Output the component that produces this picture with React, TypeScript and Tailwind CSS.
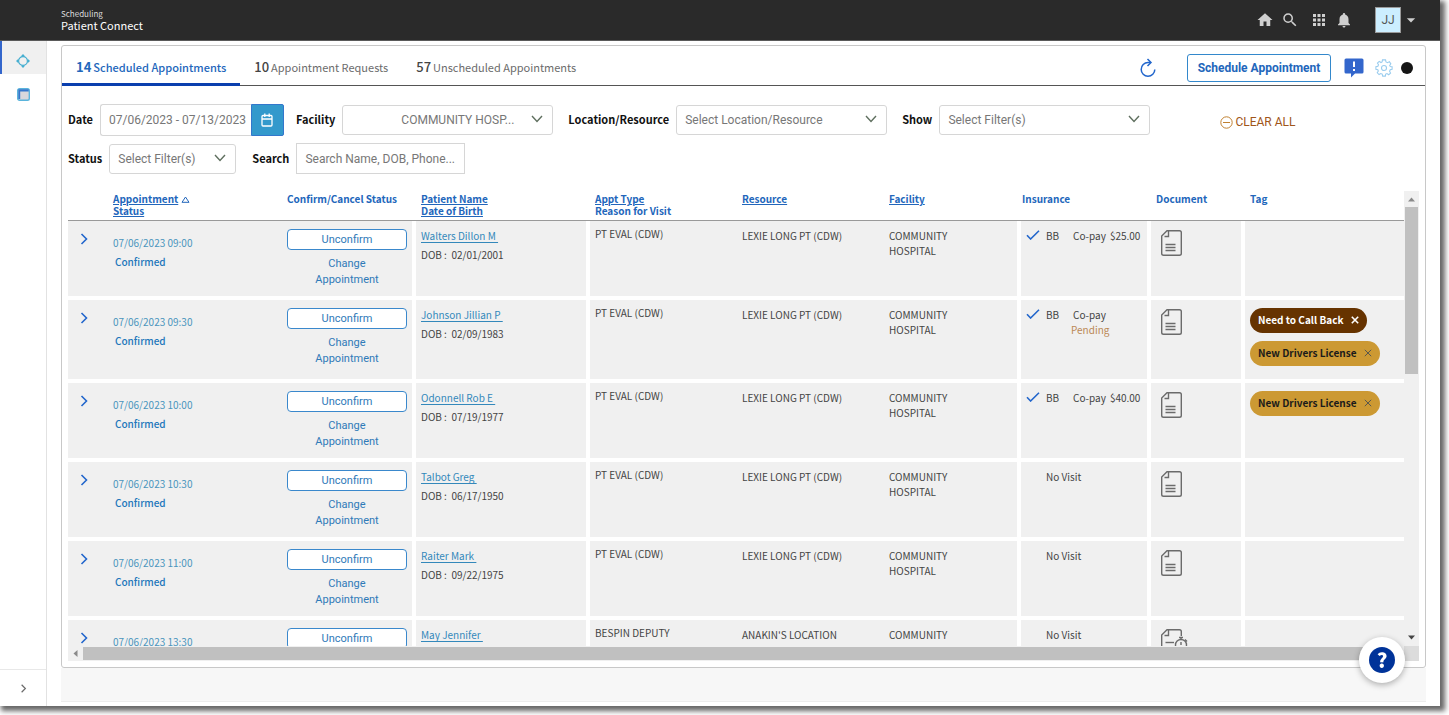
import { useState } from "react";
import type { ReactNode } from "react";
import { MdHome, MdSearch, MdApps, MdNotifications, MdArrowDropDown } from "react-icons/md";

interface Tag {
  label: string;
  dark?: boolean;
}

interface Appointment {
  time: string;
  patient: string;
  dob: string;
  apptType: string;
  resource: string;
  facility: string;
  copay?: string;
  pending?: boolean;
  insured: boolean;
  timedDocument?: boolean;
  tags: Tag[];
}

const appointments: Appointment[] = [
  {
    time: "07/06/2023 09:00",
    patient: "Walters Dillon M",
    dob: "02/01/2001",
    apptType: "PT EVAL (CDW)",
    resource: "LEXIE LONG PT (CDW)",
    facility: "COMMUNITY HOSPITAL",
    copay: "$25.00",
    insured: true,
    tags: [],
  },
  {
    time: "07/06/2023 09:30",
    patient: "Johnson Jillian P",
    dob: "02/09/1983",
    apptType: "PT EVAL (CDW)",
    resource: "LEXIE LONG PT (CDW)",
    facility: "COMMUNITY HOSPITAL",
    pending: true,
    insured: true,
    tags: [{ label: "Need to Call Back", dark: true }, { label: "New Drivers License" }],
  },
  {
    time: "07/06/2023 10:00",
    patient: "Odonnell Rob E",
    dob: "07/19/1977",
    apptType: "PT EVAL (CDW)",
    resource: "LEXIE LONG PT (CDW)",
    facility: "COMMUNITY HOSPITAL",
    copay: "$40.00",
    insured: true,
    tags: [{ label: "New Drivers License" }],
  },
  {
    time: "07/06/2023 10:30",
    patient: "Talbot Greg",
    dob: "06/17/1950",
    apptType: "PT EVAL (CDW)",
    resource: "LEXIE LONG PT (CDW)",
    facility: "COMMUNITY HOSPITAL",
    insured: false,
    tags: [],
  },
  {
    time: "07/06/2023 11:00",
    patient: "Raiter Mark",
    dob: "09/22/1975",
    apptType: "PT EVAL (CDW)",
    resource: "LEXIE LONG PT (CDW)",
    facility: "COMMUNITY HOSPITAL",
    insured: false,
    tags: [],
  },
  {
    time: "07/06/2023 13:30",
    patient: "May Jennifer",
    dob: "05/11/1988",
    apptType: "BESPIN DEPUTY",
    resource: "ANAKIN'S LOCATION",
    facility: "COMMUNITY HOSPITAL",
    insured: false,
    timedDocument: true,
    tags: [],
  },
];

const tabs = [
  { count: 14, label: "Scheduled Appointments" },
  { count: 10, label: "Appointment Requests" },
  { count: 57, label: "Unscheduled Appointments" },
];

function Chevron({ className }: { className: string }) {
  return (
    <svg viewBox="0 0 12 12" className={className} fill="none" stroke="currentColor" strokeWidth="1.6">
      <path d="M3.5 1 L8.5 6 L3.5 11" />
    </svg>
  );
}

function DocumentIcon({ timed }: { timed?: boolean }) {
  return (
    <svg viewBox="0 0 28 28" className="h-7 w-7" fill="none" stroke="#6b6b6b" strokeWidth="1.4">
      {timed ? (
        <>
          <path d="M21.3 8V3.5Q21.3 1.7 19.5 1.7H7L1.7 7V24.5Q1.7 26 3.5 26H12" />
          <path d="M8.5 2V7.5H4.5" />
          <path d="M5.5 14.5H14" />
          <circle cx="21" cy="17" r="5.5" />
          <path d="M19 9.5H23M21 9.5V11.5M21 14V17M25 11.5L27 13.5" />
        </>
      ) : (
        <>
          <path d="M7 1.7H19.5Q21.3 1.7 21.3 3.5V24.5Q21.3 26.3 19.5 26.3H3.5Q1.7 26.3 1.7 24.5V7Z" />
          <path d="M8.5 2V7.5H4.5" />
          <path d="M5.5 15.5H15.5M5.5 18.5H15.5M5.5 21.5H15.5" />
        </>
      )}
    </svg>
  );
}

function SelectBox({
  id,
  value,
  width,
  textClass,
}: {
  id: string;
  value: string;
  width: string;
  textClass: string;
}) {
  return (
    <div className={`relative ${width}`}>
      <select
        id={id}
        className={`h-[30px] w-full appearance-none rounded-[3px] border border-[#d6d6d6] bg-white pr-8 font-[Roboto,sans-serif] text-xs text-[#777777] ${textClass}`}
      >
        <option>{value}</option>
      </select>
      <svg
        viewBox="0 0 12 8"
        className="pointer-events-none absolute top-2.5 right-2.5 h-2 w-3"
        fill="none"
        stroke="#5f6f5f"
        strokeWidth="1.4"
      >
        <path d="M1 1 L6 6.5 L11 1" />
      </svg>
    </div>
  );
}

function FieldLabel({ htmlFor, children }: { htmlFor: string; children: ReactNode }) {
  return (
    <label htmlFor={htmlFor} className="mr-[7px] pb-0.5 text-[11px] leading-4 font-bold whitespace-nowrap text-[#111111]">
      {children}
    </label>
  );
}

function TagPill({ tag }: { tag: Tag }) {
  return (
    <span
      className={`flex h-[25px] w-fit items-center gap-2 rounded-full px-2 pb-0.5 text-[10px] leading-4 font-bold whitespace-nowrap ${
        tag.dark ? "bg-[#663300] text-white" : "bg-[#cc9933] text-[#1a1a1a]"
      }`}
    >
      {tag.label}
      <button type="button" aria-label={`Remove ${tag.label}`}>
        <svg
          viewBox="0 0 10 10"
          className="h-2 w-2"
          fill="none"
          stroke={tag.dark ? "#ffffff" : "#55554d"}
          strokeWidth={tag.dark ? 2 : 1.2}
        >
          <path d="M1 1L9 9M9 1L1 9" />
        </svg>
      </button>
    </span>
  );
}

function TopBar() {
  return (
    <header className="flex h-[41px] shrink-0 items-center justify-between border-b border-[#5a5a5a] bg-[#2a2a2a] pr-[19px] pl-[61px]">
      <div className="pb-0.5 text-white">
        <p className="text-[8px] leading-3 text-[#dddddd]">Scheduling</p>
        <h1 className="text-[11px] leading-[11px]">Patient Connect</h1>
      </div>
      <div className="flex items-center text-[#cfcfcf]">
        <button type="button" aria-label="Home" className="mr-[7px]">
          <MdHome className="h-[18px] w-[18px]" />
        </button>
        <button type="button" aria-label="Search" className="mr-[11px]">
          <MdSearch className="h-[18px] w-[18px]" />
        </button>
        <button type="button" aria-label="Apps" className="mr-[7px]">
          <MdApps className="h-[18px] w-[18px]" />
        </button>
        <button type="button" aria-label="Notifications" className="mr-[22px]">
          <MdNotifications className="h-[18px] w-[18px]" />
        </button>
        <button type="button" className="flex items-center">
          <span className="flex h-[26px] w-[26px] items-center justify-center border border-[#9a9a9a] bg-[#cceeff] font-[Roboto,sans-serif] text-xs text-[#555555]">
            JJ
          </span>
          <MdArrowDropDown className="h-5 w-5" />
        </button>
      </div>
    </header>
  );
}

function SideNav() {
  return (
    <nav className="flex w-[47px] shrink-0 flex-col border-r border-[#e2e2e2] bg-white">
      <a
        href="#connect"
        aria-label="Patient Connect"
        className="flex h-[33px] items-center justify-center border-l-2 border-[#3366cc] bg-[#f0f0f0] pt-1.5 pr-[3px]"
      >
        <svg viewBox="0 0 14 14" className="h-3.5 w-3.5" fill="none" stroke="#45aed0" strokeWidth="1.2">
          <circle cx="7" cy="7" r="4.4" />
          <g fill="#45aed0" stroke="none">
            <path d="M7 0L9.3 2.4H4.7Z" />
            <path d="M7 14L9.3 11.6H4.7Z" />
            <path d="M0 7L2.4 4.7V9.3Z" />
            <path d="M14 7L11.6 4.7V9.3Z" />
          </g>
        </svg>
      </a>
      <a href="#calendar" aria-label="Calendar" className="mt-3.5 flex justify-center">
        <svg viewBox="0 0 13 13" className="h-[13px] w-[13px]">
          <rect x="0.7" y="0.7" width="11.6" height="11.6" rx="1.8" fill="#d8d8dc" stroke="#5ab4dc" strokeWidth="1.4" />
          <path d="M1.3 1.3H11.7V3.6H3.2V11H1.3Z" fill="#3377cc" />
        </svg>
      </a>
      <button
        type="button"
        aria-label="Expand navigation"
        className="mt-auto flex h-[37px] items-center justify-center border-t border-[#e8e8e8] text-[#6b6b6b]"
      >
        <Chevron className="h-[9px] w-[9px]" />
      </button>
    </nav>
  );
}

function TabBar() {
  const [active, setActive] = useState(0);

  return (
    <div className="flex h-10 shrink-0 items-stretch justify-between border-b border-[#555555]">
      <div role="tablist" className="flex">
        {tabs.map((tab, idx) => (
          <button
            key={tab.label}
            type="button"
            role="tab"
            aria-selected={active === idx}
            onClick={() => setActive(idx)}
            className={`-mb-px flex items-center gap-0.5 border-b-[3px] px-3.5 pt-1 text-[11px] leading-4 whitespace-nowrap ${
              active === idx
                ? "border-[#0a3fae] font-medium text-[#2266bb]"
                : "border-transparent text-[#6b6b6b]"
            }`}
          >
            <span className={`text-[13px] ${active === idx ? "font-bold" : "font-medium text-[#444444]"}`}>
              {tab.count}
            </span>
            {tab.label}
          </button>
        ))}
      </div>
      <div className="flex items-center pt-1 pr-3">
        <button type="button" aria-label="Refresh" className="mr-[30px]">
          <svg viewBox="0 0 18 20" className="h-5 w-[18px]" fill="none" stroke="#2266cc" strokeWidth="1.5">
            <path d="M11 4.6H9A6.8 6.8 0 1 0 15.8 11.4" />
            <path d="M8.5 1L12 4.6L8.5 8" />
          </svg>
        </button>
        <button
          type="button"
          className="mr-[13px] h-7 w-36 rounded-[3px] border border-[#3388cc] bg-white font-[Roboto,sans-serif] text-xs font-bold whitespace-nowrap text-[#2266bb]"
        >
          Schedule Appointment
        </button>
        <button type="button" aria-label="Feedback" className="mr-[11px]">
          <svg viewBox="0 0 20 20" className="h-5 w-5">
            <path d="M2 0.5H18Q19.5 0.5 19.5 2V14Q19.5 15.5 18 15.5H11L7 19.5V15.5H2Q0.5 15.5 0.5 14V2Q0.5 0.5 2 0.5Z" fill="#3366cc" />
            <path d="M10 3.5V9M10 11V13" stroke="#ffffff" strokeWidth="2" />
          </svg>
        </button>
        <button type="button" aria-label="Settings" className="mr-2">
          <svg viewBox="0 0 20 20" className="h-[18px] w-[18px]" fill="none" stroke="#99ccee" strokeWidth="1.2">
            <path d="M8.3 1H11.7L12.2 3.3L14 4.1L16 2.9L17.6 5.4L16.3 7.3L17 8.3L19 8.5V11.5L16.9 12L16.2 13.6L17.3 15.6L15.2 17.5L13.3 16.2L11.9 16.8L11.5 19H8.5L8 16.8L6.4 16.1L4.5 17.3L2.5 15.3L3.7 13.4L3.1 12L1 11.5V8.5L3.2 8L3.9 6.4L2.7 4.5L4.7 2.6L6.6 3.9L7.9 3.3Z" />
            <circle cx="10" cy="10" r="2.8" />
          </svg>
        </button>
        <span className="h-3 w-3 rounded-full bg-[#151515]" />
      </div>
    </div>
  );
}

function Filters() {
  return (
    <form className="shrink-0 pt-[18px] pl-[6px]">
      <div className="flex h-8 items-center">
        <FieldLabel htmlFor="date">Date</FieldLabel>
        <div className="flex">
          <input
            id="date"
            type="text"
            defaultValue="07/06/2023 - 07/13/2023"
            className="h-8 w-[151px] rounded-l-[3px] border border-r-0 border-[#d6d6d6] bg-white pl-2 font-[Roboto,sans-serif] text-xs text-[#777777]"
          />
          <button
            type="button"
            aria-label="Open calendar"
            className="flex h-8 w-[33px] items-center justify-center rounded-r-[2px] border border-[#3377cc] bg-[#3399cc]"
          >
            <svg viewBox="0 0 12 14" className="h-3.5 w-3" fill="none" stroke="#ffffff" strokeWidth="1.3">
              <rect x="1" y="2.5" width="10" height="10.5" rx="1" />
              <path d="M1 6H11M3.8 0.5V4M8.2 0.5V4" />
            </svg>
          </button>
        </div>
        <div className="ml-3 flex items-center">
          <FieldLabel htmlFor="facility">Facility</FieldLabel>
          <SelectBox id="facility" value="COMMUNITY HOSP..." width="w-[211px]" textClass="pl-[58px]" />
        </div>
        <div className="ml-[15px] flex items-center">
          <FieldLabel htmlFor="location">Location/Resource</FieldLabel>
          <SelectBox id="location" value="Select Location/Resource" width="w-[211px]" textClass="pl-2" />
        </div>
        <div className="ml-[15px] flex items-center">
          <FieldLabel htmlFor="show">Show</FieldLabel>
          <SelectBox id="show" value="Select Filter(s)" width="w-[211px]" textClass="pl-2" />
        </div>
        <button
          type="reset"
          className="ml-[70px] flex items-center gap-0.5 pt-1 font-[Roboto,sans-serif] text-xs whitespace-nowrap text-[#a0561a]"
        >
          <svg viewBox="0 0 13 13" className="h-[13px] w-[13px]" fill="none" stroke="#c08030" strokeWidth="1">
            <circle cx="6.5" cy="6.5" r="5.7" />
            <path d="M3 6.5H10" />
          </svg>
          CLEAR ALL
        </button>
      </div>
      <div className="mt-[7px] flex h-[31px] items-center">
        <FieldLabel htmlFor="status">Status</FieldLabel>
        <SelectBox id="status" value="Select Filter(s)" width="w-[127px]" textClass="pl-2" />
        <div className="ml-4 flex items-center">
          <FieldLabel htmlFor="search">Search</FieldLabel>
          <input
            id="search"
            type="text"
            placeholder="Search Name, DOB, Phone..."
            className="h-[31px] w-[169px] border border-[#d6d6d6] bg-white px-2 font-[Roboto,sans-serif] text-xs placeholder:text-[#777777]"
          />
        </div>
      </div>
    </form>
  );
}

const head =
  "border-b border-[#999999] pt-0.5 pl-[5px] text-left align-top text-[10px] leading-3 font-bold text-[#2266bb]";
const cell = "border-b-4 border-white bg-[#f0f0f0] pl-[5px] align-top";

function AppointmentRow({ item }: { item: Appointment }) {
  return (
    <tr className="h-[79px]">
      <td className={cell}>
        <button type="button" aria-label={`Expand ${item.patient}`} className="mt-3 ml-[5px] block text-[#2266cc]">
          <Chevron className="h-3 w-3" />
        </button>
      </td>
      <td className={cell}>
        <p className="pt-3.5 text-[10px] leading-4 text-[#4a95bd]">{item.time}</p>
        <p className="pt-[3px] pl-0.5 text-[10px] leading-4 font-medium text-[#2277bb]">Confirmed</p>
      </td>
      <td className={`${cell} pr-[5px] font-[Roboto,sans-serif] text-[11px] text-[#2f7ab8]`}>
        <button type="button" className="mt-2 block h-[21px] w-full rounded-[4px] border border-[#3a88cc] bg-white leading-4">
          Unconfirm
        </button>
        <a href="#change" className="mt-1.5 block px-4 text-center leading-4">
          Change Appointment
        </a>
      </td>
      <td className={`${cell} border-l-4 text-[10px] leading-4`}>
        <a href="#patient" className="mt-[7px] block w-fit whitespace-pre text-[#3388bb] underline underline-offset-2">
          {item.patient + " "}
        </a>
        <p className="mt-[3px] text-[#444444]">DOB :&nbsp; {item.dob}</p>
      </td>
      <td className={`${cell} border-l-4 pt-[5px] text-[10px] leading-[15px] text-[#444444]`}>{item.apptType}</td>
      <td className={`${cell} pt-[7px] text-[10px] leading-[15px] text-[#444444]`}>{item.resource}</td>
      <td className={`${cell} pt-[7px] pr-12 text-[10px] leading-[15px] text-[#444444]`}>{item.facility}</td>
      <td className={`${cell} border-l-4 pt-[7px] text-[10px] leading-[15px] text-[#444444]`}>
        {item.insured ? (
          <div className="flex">
            <svg viewBox="0 0 14 10" className="mt-0.5 mr-1.5 h-2.5 w-3.5 shrink-0" fill="none" stroke="#2266cc" strokeWidth="1.6">
              <path d="M1 5.2L4.6 9L13 0.8" />
            </svg>
            <span className="w-[27px]">BB</span>
            <span>
              Co-pay
              {item.copay && <span className="ml-1">{item.copay}</span>}
              {item.pending && <span className="-ml-0.5 block text-[#bb8855]">Pending</span>}
            </span>
          </div>
        ) : (
          <span className="pl-5">No Visit</span>
        )}
      </td>
      <td className={`${cell} border-l-4 pt-2`}>
        <a href="#document" aria-label="Document" className="ml-1 block w-fit">
          <DocumentIcon timed={item.timedDocument} />
        </a>
      </td>
      <td className={`${cell} border-l-4`}>
        <div className="flex flex-col gap-2 pt-2 pb-[13px]">
          {item.tags.map((tag) => (
            <TagPill key={tag.label} tag={tag} />
          ))}
        </div>
      </td>
    </tr>
  );
}

function AppointmentTable() {
  return (
    <table className="w-full table-fixed border-separate border-spacing-0">
      <colgroup>
        <col className="w-10" />
        <col className="w-[174px]" />
        <col className="w-[130px]" />
        <col className="w-[174px]" />
        <col className="w-[151px]" />
        <col className="w-[147px]" />
        <col className="w-[133px]" />
        <col className="w-[130px]" />
        <col className="w-[94px]" />
        <col />
      </colgroup>
      <thead>
        <tr className="h-[30px]">
          <th className={head} aria-label="Expand" />
          <th className={head}>
            <span className="flex items-center gap-[3px]">
              <a href="#sort-appointment" className="underline">
                Appointment
              </a>
              <svg viewBox="0 0 9 7" className="h-[7px] w-[9px]" fill="none" stroke="#2266bb">
                <path d="M1 6.3L4.5 1L8 6.3Z" />
              </svg>
            </span>
            <a href="#sort-status" className="block underline">
              Status
            </a>
          </th>
          <th className={head}>Confirm/Cancel Status</th>
          <th className={`${head} pl-[9px]`}>
            <a href="#sort-name" className="block underline">
              Patient Name
            </a>
            <a href="#sort-dob" className="block underline">
              Date of Birth
            </a>
          </th>
          <th className={`${head} pl-[9px]`}>
            <a href="#sort-type" className="block underline">
              Appt Type
            </a>
            Reason for Visit
          </th>
          <th className={head}>
            <a href="#sort-resource" className="underline">
              Resource
            </a>
          </th>
          <th className={head}>
            <a href="#sort-facility" className="underline">
              Facility
            </a>
          </th>
          <th className={head}>Insurance</th>
          <th className={`${head} pl-[9px]`}>Document</th>
          <th className={`${head} pl-[9px]`}>Tag</th>
        </tr>
      </thead>
      <tbody>
        {appointments.map((item) => (
          <AppointmentRow key={item.time} item={item} />
        ))}
      </tbody>
    </table>
  );
}

export default function App() {
  return (
    <div className="h-screen bg-white pr-[9px] pb-[9px] font-['Noto_Sans_CJK_JP','Noto_Sans',sans-serif]">
      <div className="flex h-full flex-col bg-white shadow-[3px_3px_5px_2px_rgba(0,0,0,0.6)]">
        <TopBar />
        <div className="flex min-h-0 flex-1">
          <SideNav />
          <main className="flex min-w-0 flex-1 flex-col pt-1 pr-3.5 pb-1 pl-3.5">
            <section className="flex min-h-0 flex-1 flex-col rounded-[3px] border border-[#c8c8c8]">
              <TabBar />
              <Filters />
              <div className="mt-[17px] mr-1.5 mb-1.5 ml-1.5 flex min-h-0 flex-1 flex-col">
                <div className="flex min-h-0 flex-1">
                  <div className="min-w-0 flex-1 overflow-hidden">
                    <AppointmentTable />
                  </div>
                  <div aria-hidden="true" className="flex w-[15px] flex-col items-center bg-[#f0f0f0]">
                    <svg viewBox="0 0 15 16" className="h-4 w-[15px] shrink-0" fill="#8a8a8a">
                      <path d="M4 10.5L7.5 6.5L11 10.5Z" />
                    </svg>
                    <div className="h-[167px] w-[13px] shrink-0 bg-[#c0c0c0]" />
                    <svg viewBox="0 0 15 16" className="mt-auto h-4 w-[15px] shrink-0" fill="#444444">
                      <path d="M4 5.5L7.5 9.5L11 5.5Z" />
                    </svg>
                  </div>
                </div>
                <div aria-hidden="true" className="flex h-[15px] shrink-0 items-center bg-[#f0f0f0]">
                  <svg viewBox="0 0 15 15" className="h-[15px] w-[15px] shrink-0" fill="#8a8a8a">
                    <path d="M9.5 4L5.5 7.5L9.5 11Z" />
                  </svg>
                  <div className="h-[13px] flex-1 bg-[#c0c0c0]" />
                  <div className="ml-3.5 h-[15px] w-[15px] bg-[#dcdcdc]" />
                </div>
              </div>
            </section>
            <div className="h-[34px] shrink-0 border-b border-[#ececec] bg-[#f7f7f7]" />
          </main>
        </div>
      </div>
      <button
        type="button"
        aria-label="Help"
        className="fixed right-11 bottom-8 flex h-[46px] w-[46px] items-center justify-center rounded-full bg-white shadow-[0_2px_6px_rgba(0,0,0,0.3)]"
      >
        <span className="flex h-[26px] w-[26px] items-center justify-center rounded-full bg-[#003399] text-xl leading-none font-black text-white">
          ?
        </span>
      </button>
    </div>
  );
}
